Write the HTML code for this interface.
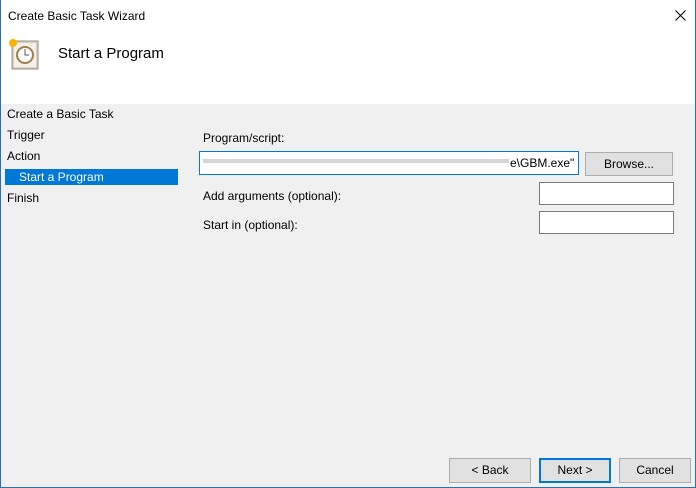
<!DOCTYPE html><html><head><style>
body{margin:0;width:696px;height:488px;background:#f0f0f0;font-family:"Liberation Sans",sans-serif;font-size:12px;color:#000;position:relative;overflow:hidden}
.a{position:absolute;white-space:nowrap}
.btn{position:absolute;background:#e1e1e1;border:1px solid #adadad;box-sizing:border-box;text-align:center;line-height:22px}
.tb{position:absolute;background:#fff;border:1px solid #7a7a7a;box-sizing:border-box}
</style></head><body>
<div class="a" style="left:0;top:0;width:696px;height:104px;background:#fff"></div>
<div class="a" style="left:8px;top:9px">Create Basic Task Wizard</div>
<svg class="a" style="left:675px;top:10px" width="11" height="11"><path d="M0.5 0.5L10.5 10.5M10.5 0.5L0.5 10.5" stroke="#000" stroke-width="1"/></svg>
<svg class="a" style="left:6px;top:36px" width="34" height="34"><rect x="6" y="5" width="26" height="28" fill="#d9d2c5" stroke="#9a8f80"/><rect x="8" y="7" width="22" height="24" fill="#f5f1ea"/><circle cx="19" cy="19" r="8" fill="#fff" stroke="#a08050" stroke-width="2"/><path d="M19 13v6h4" stroke="#555" fill="none"/><circle cx="7" cy="7" r="4" fill="#f7b500"/></svg>
<div class="a" style="left:58px;top:45px;font-size:15px">Start a Program</div>
<div class="a" style="left:7px;top:107px">Create a Basic Task</div>
<div class="a" style="left:7px;top:128px">Trigger</div>
<div class="a" style="left:7px;top:149px">Action</div>
<div class="a" style="left:5px;top:169px;width:173px;height:16px;background:#0078d7"></div>
<div class="a" style="left:19px;top:170px;color:#fff">Start a Program</div>
<div class="a" style="left:7px;top:191px">Finish</div>
<div class="a" style="left:203px;top:131px">Program/script:</div>
<div class="tb" style="left:199px;top:151px;width:380px;height:24px;border-color:#0078d7"></div>
<div class="a" style="left:203px;top:159px;width:306px;height:4px;background:#bbb;opacity:.6"></div>
<div class="a" style="left:510px;top:156px">e\GBM.exe"</div>
<div class="btn" style="left:585px;top:152px;width:88px;height:24px">Browse...</div>
<div class="a" style="left:203px;top:189px">Add arguments (optional):</div>
<div class="tb" style="left:539px;top:182px;width:135px;height:23px"></div>
<div class="a" style="left:203px;top:218px">Start in (optional):</div>
<div class="tb" style="left:539px;top:211px;width:135px;height:23px"></div>
<div class="btn" style="left:449px;top:458px;width:82px;height:25px">&lt; Back</div>
<div class="btn" style="left:539px;top:458px;width:72px;height:25px;border:2px solid #0078d7;line-height:21px">Next &gt;</div>
<div class="btn" style="left:619px;top:458px;width:72px;height:25px">Cancel</div>
<div class="a" style="left:695px;top:0;width:1px;height:488px;background:#2b6fb5"></div>
<div class="a" style="left:0;top:487px;width:696px;height:1px;background:#2b6fb5"></div>
<div class="a" style="left:0;top:0;width:1px;height:488px;background:#2b6fb5"></div>
</body></html>
